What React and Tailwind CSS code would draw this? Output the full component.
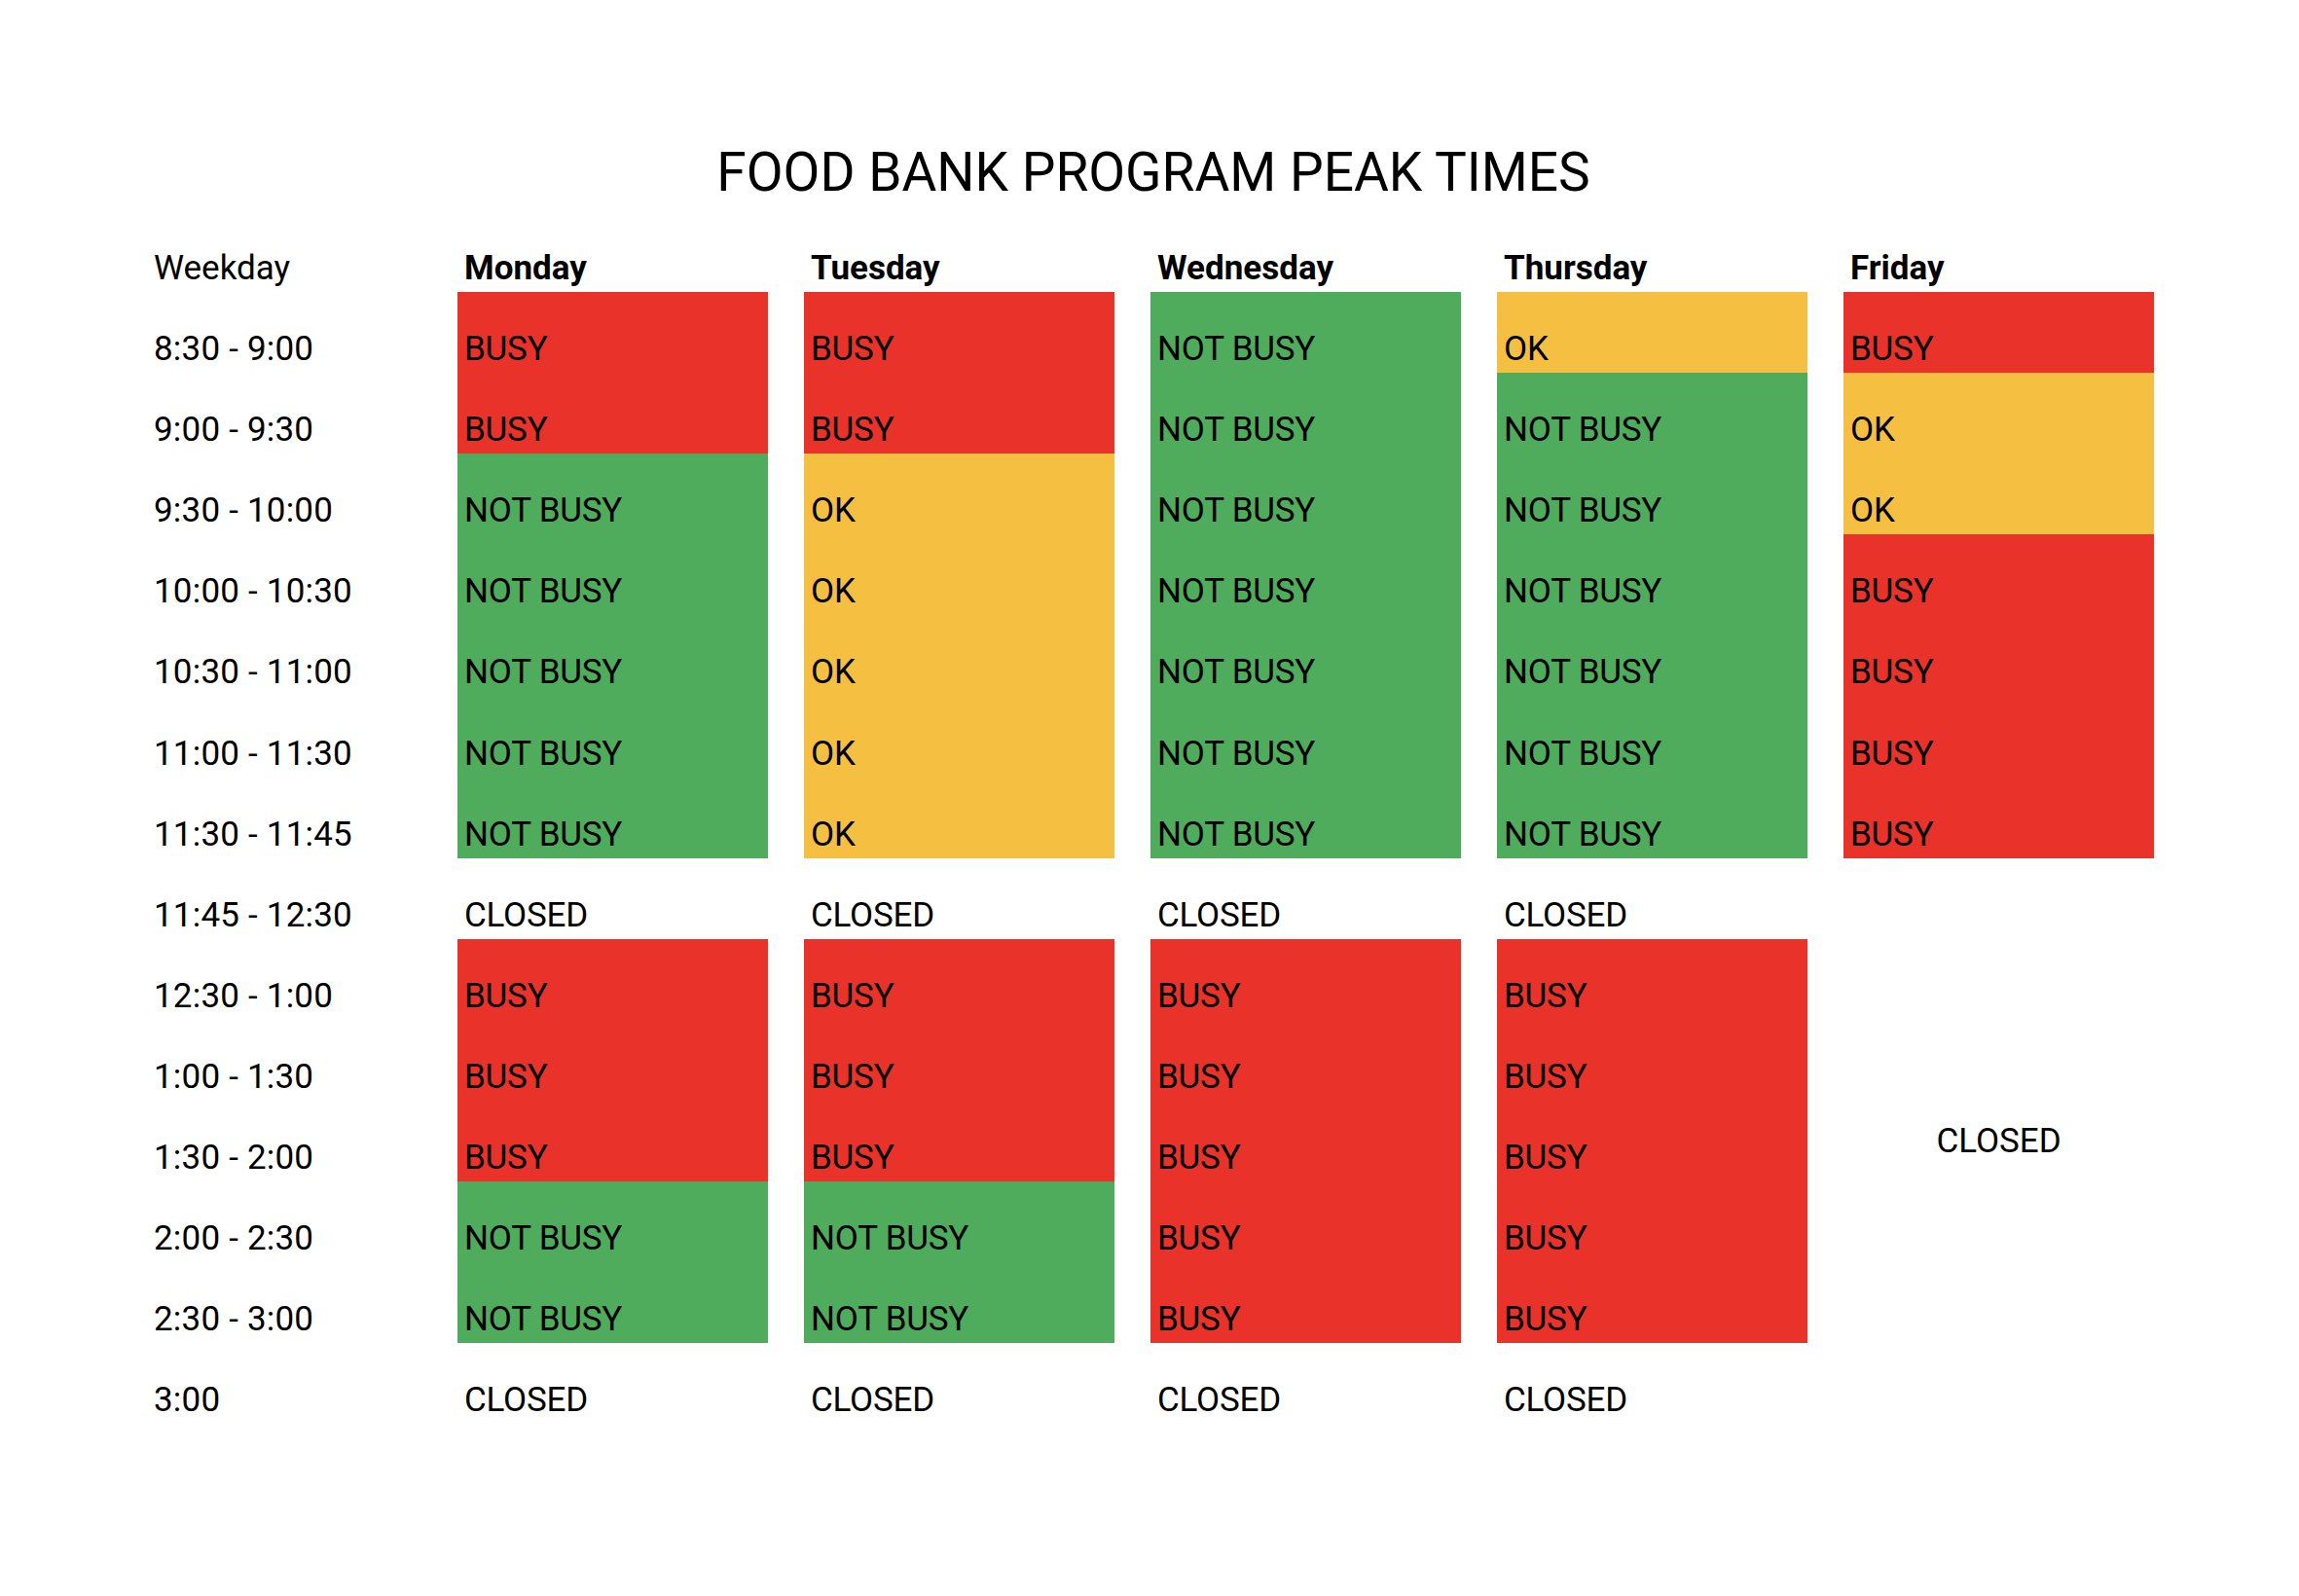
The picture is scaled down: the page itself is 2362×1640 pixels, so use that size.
const times = [
  "8:30 - 9:00",
  "9:00 - 9:30",
  "9:30 - 10:00",
  "10:00 - 10:30",
  "10:30 - 11:00",
  "11:00 - 11:30",
  "11:30 - 11:45",
  "11:45 - 12:30",
  "12:30 - 1:00",
  "1:00 - 1:30",
  "1:30 - 2:00",
  "2:00 - 2:30",
  "2:30 - 3:00",
  "3:00",
];

const days = ["Monday", "Tuesday", "Wednesday", "Thursday", "Friday"];

// B = busy, N = not busy, O = ok, C = closed
const schedule = {
  Monday: "BBNNNNNCBBBNNC",
  Tuesday: "BBOOOOOCBBBNNC",
  Wednesday: "NNNNNNNCBBBBBC",
  Thursday: "ONNNNNNCBBBBBC",
  Friday: "BOOBBBB",
};

const cellStyle = {
  B: { label: "BUSY", bg: "bg-[#e9332a]" },
  N: { label: "NOT BUSY", bg: "bg-[#4fac5c]" },
  O: { label: "OK", bg: "bg-[#f5bf42]" },
  C: { label: "CLOSED", bg: "bg-white" },
};

const Cell = ({ code }) => {
  const s = cellStyle[code];
  return (
    <div className={`${s.bg} flex items-end px-[7px] pb-[4px] leading-[40px] tracking-[-0.2px]`}>
      {s.label}
    </div>
  );
};

const App = () => {
  return (
    <div className="w-[2362px] h-[1640px] bg-white text-black font-['Roboto',sans-serif] text-[35px]">
      <h1 className="pt-[144px] pl-[8px] text-center text-[55px] leading-[66px] font-normal">
        FOOD BANK PROGRAM PEAK TIMES
      </h1>
      <div className="mt-[7px] pl-[152px] grid grid-cols-[281px_319px_319px_319px_319px_319px] gap-x-[37px] grid-rows-[repeat(15,83.08px)]">
        <div className="flex items-end px-[6px] pb-[4px] leading-[40px]">Weekday</div>
        {days.map((d) => (
          <div key={d} className="flex items-end px-[7px] pb-[4px] leading-[40px] font-bold">
            {d}
          </div>
        ))}
        {times.map((t, i) => (
          <div key={t} className="contents">
            <div className="flex items-end px-[6px] pb-[4px] leading-[40px] tracking-[0.2px]">{t}</div>
            {days.slice(0, 4).map((d) => (
              <Cell key={d} code={schedule[d][i]} />
            ))}
            {i < 7 && <Cell code={schedule.Friday[i]} />}
            {i === 7 && (
              <div className="row-span-7 flex items-center justify-center leading-[40px] pt-[2px]">
                CLOSED
              </div>
            )}
          </div>
        ))}
      </div>
    </div>
  );
};

export default App;
